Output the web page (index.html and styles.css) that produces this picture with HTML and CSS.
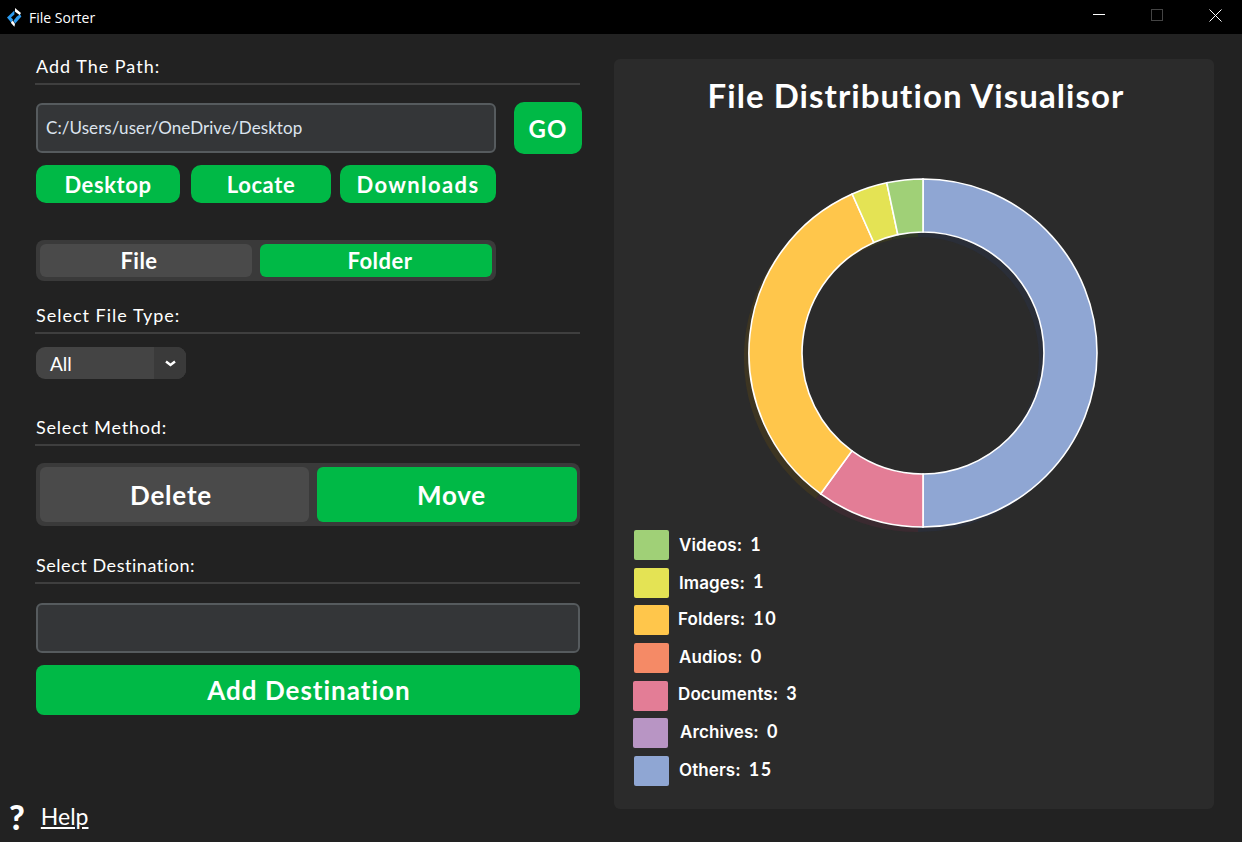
FILE: index.html
```html
<!DOCTYPE html>
<html lang="en">
<head>
<meta charset="utf-8">
<title>File Sorter</title>
<link rel="stylesheet" href="styles.css">
</head>
<body>
<div class="window">
  <header class="titlebar">
    <div class="brand">
      <svg class="logo" width="20" height="22" viewBox="0 0 20 22">
        <path d="M10.4 4.6 L3 11.4 L7.4 16.8 L9 13.6 L7 11.4 L10.4 8.4 Z" fill="#2c9cf0"/>
        <path d="M16 8.2 L17.4 10.4 L11 17.8 L9.6 14.4 L12.6 10.8 Z" fill="#2c9cf0"/>
        <path d="M11 2 L17 7 L15.6 9 L11 5.8 Z" fill="#fff"/>
        <path d="M8.8 14.4 L11 18 L10.4 20.8 L6.8 16.8 Z" fill="#fff"/>
      </svg>
      <span>File Sorter</span>
    </div>
    <div class="winctl">
      <svg width="12" height="12" viewBox="0 0 12 12"><path d="M0 5.5H12" stroke="#fff" fill="none"/></svg>
      <svg width="12" height="12" viewBox="0 0 12 12"><rect x="0.5" y="0.5" width="11" height="11" stroke="#444" fill="none"/></svg>
      <svg width="13" height="13" viewBox="0 0 13 13"><path d="M0.5 0.5L12.5 12.5M12.5 0.5L0.5 12.5" stroke="#fff" fill="none"/></svg>
    </div>
  </header>
  <main class="main">
    <section class="left">
      <h2 class="heading first">Add The Path:</h2>
      <div class="path-row">
        <div class="entry">C:/Users/user/OneDrive/Desktop</div>
        <button class="btn go">GO</button>
      </div>
      <div class="shortcuts">
        <button class="btn sc-desktop">Desktop</button>
        <button class="btn sc-locate">Locate</button>
        <button class="btn sc-downloads">Downloads</button>
      </div>
      <div class="seg seg-small">
        <div class="seg-item off s-file">File</div>
        <div class="seg-item on s-folder">Folder</div>
      </div>
      <h2 class="heading type-h">Select File Type:</h2>
      <div class="select">
        <span class="select-val">All</span>
        <span class="select-arrow">
          <svg width="11" height="7" viewBox="0 0 11 7"><path d="M1 1.5L5.5 5L10 1.5" stroke="#fff" stroke-width="2.4" fill="none"/></svg>
        </span>
      </div>
      <h2 class="heading method-h">Select Method:</h2>
      <div class="seg seg-large">
        <div class="seg-item off s-delete">Delete</div>
        <div class="seg-item on s-move">Move</div>
      </div>
      <h2 class="heading dest-h">Select Destination:</h2>
      <div class="entry entry-dest"></div>
      <button class="btn add">Add Destination</button>
      <div class="help">
        <span class="help-q">?</span>
        <a class="help-link">Help</a>
      </div>
    </section>
    <section class="panel">
      <h1 class="panel-title">File Distribution Visualisor</h1>
      <svg class="chart" width="370" height="360" viewBox="0 0 370 360">
        <g transform="translate(180 180)">
          <g transform="translate(-5 5)">
            <path fill="#2a2e38" d="M0 -174A174 174 0 0 1 0 174L0 121A121 121 0 0 0 0 -121Z"/>
            <path fill="#3a2a30" d="M0 174A174 174 0 0 1 -102.3 140.8L-71.1 97.9A121 121 0 0 0 0 121Z"/>
            <path fill="#3d3522" d="M-102.3 140.8A174 174 0 0 1 -70.8 -159L-49.2 -110.5A121 121 0 0 0 -71.1 97.9Z"/>
            <path fill="#393822" d="M-70.8 -159A174 174 0 0 1 -36.2 -170.2L-25.2 -118.4A121 121 0 0 0 -49.2 -110.5Z"/>
            <path fill="#2f3726" d="M-36.2 -170.2A174 174 0 0 1 0 -174L0 -121A121 121 0 0 0 -25.2 -118.4Z"/>
          </g>
          <g class="slices">
            <path fill="#8fa6d3" d="M0 -174A174 174 0 0 1 0 174L0 121A121 121 0 0 0 0 -121Z"/>
            <path fill="#e37d96" d="M0 174A174 174 0 0 1 -102.3 140.8L-71.1 97.9A121 121 0 0 0 0 121Z"/>
            <path fill="#ffc64b" d="M-102.3 140.8A174 174 0 0 1 -70.8 -159L-49.2 -110.5A121 121 0 0 0 -71.1 97.9Z"/>
            <path fill="#e4e354" d="M-70.8 -159A174 174 0 0 1 -36.2 -170.2L-25.2 -118.4A121 121 0 0 0 -49.2 -110.5Z"/>
            <path fill="#a0d077" d="M-36.2 -170.2A174 174 0 0 1 0 -174L0 -121A121 121 0 0 0 -25.2 -118.4Z"/>
          </g>
        </g>
      </svg>
      <ul class="legend">
        <li class="row"><span class="swatch c-videos"></span><span class="name">Videos:</span><span class="val">1</span></li>
        <li class="row"><span class="swatch c-images"></span><span class="name">Images:</span><span class="val">1</span></li>
        <li class="row lift"><span class="swatch c-folders"></span><span class="name n-tight">Folders:</span><span class="val">10</span></li>
        <li class="row lift"><span class="swatch c-audios"></span><span class="name">Audios:</span><span class="val">0</span></li>
        <li class="row lift out"><span class="swatch c-docs"></span><span class="name">Documents:</span><span class="val">3</span></li>
        <li class="row lift out"><span class="swatch c-arch"></span><span class="name n-wide">Archives:</span><span class="val">0</span></li>
        <li class="row lift"><span class="swatch c-others"></span><span class="name">Others:</span><span class="val">15</span></li>
      </ul>
    </section>
  </main>
</div>
</body>
</html>
```
FILE: styles.css
```css
* { box-sizing: border-box; }
html, body { margin: 0; padding: 0; }
body { width: 1242px; height: 842px; overflow: hidden; background: #222222; color: #fff; font-family: "Lato", "Liberation Sans", sans-serif; }
.window { display: flex; flex-direction: column; height: 842px; }
.titlebar { height: 34px; background: #000; display: flex; align-items: center; justify-content: space-between; flex: none; }
.brand { display: flex; align-items: center; gap: 5px; padding-left: 4px; font: 14px "Open Sans", "Liberation Sans", sans-serif; color: #fff; }
.winctl { display: flex; align-items: center; gap: 46px; padding: 0 20px 4px 0; }
.main { flex: 1; display: flex; min-height: 0; }
.left { width: 614px; flex: none; padding-left: 36px; position: relative; display: flex; flex-direction: column; align-items: flex-start; }
.heading { margin: 0 0 0 -1px; width: 545px; height: 31px; padding-left: 1px; font-size: 18px; font-weight: 400; line-height: 24px; letter-spacing: 1px; border-bottom: 2px solid #3f3f3f; color: #fff; flex: none; }
.heading.first { margin-top: 20px; }
.type-h { margin-top: 22px; }
.method-h { margin-top: 36px; letter-spacing: .8px; }
.dest-h { margin-top: 27px; letter-spacing: .55px; }
.path-row { display: flex; align-items: center; gap: 18px; margin-top: 17px; }
.entry { width: 460px; height: 50px; background: #343638; border: 2px solid #565b5e; border-radius: 6px; color: #dce4ee; font-size: 17px; line-height: 46px; padding-left: 8px; letter-spacing: .07px; flex: none; }
.btn { border: 0; background: #00b946; color: #fff; font-family: inherit; font-weight: 700; border-radius: 8px; padding: 0; display: block; }
.go { width: 68px; height: 52px; font-size: 24px; letter-spacing: 1px; border-radius: 10px; }
.shortcuts { display: flex; margin-top: 11px; height: 38px; flex: none; }
.shortcuts .btn { height: 38px; font-size: 22px; letter-spacing: .6px; border-radius: 10px; }
.sc-desktop { width: 144px; }
.sc-locate { width: 140px; margin-left: 11px; }
.shortcuts .sc-downloads { width: 156px; margin-left: 9px; letter-spacing: 1.4px; }
.seg { display: flex; background: #3a3a3a; border-radius: 8px; padding: 4px; flex: none; }
.seg-small { width: 460px; height: 41px; margin-top: 37px; }
.seg-item { display: flex; align-items: center; justify-content: center; border-radius: 6px; font-weight: 700; flex: none; }
.seg-item.off { background: #4a4a4a; }
.seg-item.on { background: #00b946; }
.seg-small .seg-item { font-size: 22px; letter-spacing: .5px; }
.s-file { width: 212px; padding-right: 14px; }
.s-folder { width: 232px; margin-left: 8px; padding-left: 8px; }
.select { display: flex; width: 150px; height: 32px; margin-top: 13px; background: #444444; border-radius: 9px; overflow: hidden; flex: none; }
.select-val { width: 118px; padding-left: 14px; font-size: 19px; line-height: 34px; color: #fff; }
.select-arrow { width: 32px; background: #3a3a3a; display: flex; align-items: center; justify-content: center; }
.seg-large { width: 544px; height: 63px; margin-top: 17px; }
.seg-large .seg-item { font-size: 26px; letter-spacing: .8px; }
.s-delete { width: 269px; padding-right: 7px; }
.s-move { width: 260px; margin-left: 8px; padding-left: 9px; }
.entry-dest { width: 544px; margin-top: 19px; }
.add { width: 544px; height: 50px; margin-top: 12px; padding-left: 2px; font-size: 26px; letter-spacing: 1px; flex: none; }
.help { position: absolute; left: 9px; bottom: 8px; display: flex; align-items: center; gap: 16px; }
.help-q { font-size: 34px; font-weight: 900; line-height: 34px; }
.help-link { font-size: 23px; text-decoration: underline; line-height: 34px; margin-top: -2px; }
.panel { width: 600px; height: 750px; margin-top: 25px; background: #2b2b2b; border-radius: 6px; display: flex; flex-direction: column; flex: none; }
.panel-title { margin: 14px 0 0 4px; font-size: 33px; line-height: 44px; font-weight: 700; letter-spacing: 1.05px; text-align: center; }
.chart { display: block; margin: 56px 0 0 129px; flex: none; }
.slices path { stroke: #fff; stroke-width: 1.6; }
.legend { list-style: none; margin: -3px 0 0; padding: 0 0 0 20px; }
.row { display: flex; align-items: center; height: 30px; margin-bottom: 7.7px; font-size: 17px; }
.row.out { margin-left: -1px; }
.swatch { width: 35px; height: 30px; border-radius: 2px; flex: none; margin-right: 10px; }
.name { font-family: "Inter", sans-serif; font-weight: 600; font-size: 17px; letter-spacing: .1px; margin-right: 8px; }
.lift .name { margin-top: -3px; }
.n-tight { margin-left: -1px; }
.n-wide { margin-left: 2px; }
.val { font-family: "Lato", sans-serif; font-weight: 700; font-size: 18px; letter-spacing: 1.5px; margin-top: -3px; }
.lift .val { margin-top: -5px; }
.c-videos { background: #a0d077; }
.c-images { background: #e4e354; }
.c-folders { background: #ffc64b; }
.c-audios { background: #f58a66; }
.c-docs { background: #e37d96; }
.c-arch { background: #b895c4; }
.c-others { background: #8fa6d3; }
```
